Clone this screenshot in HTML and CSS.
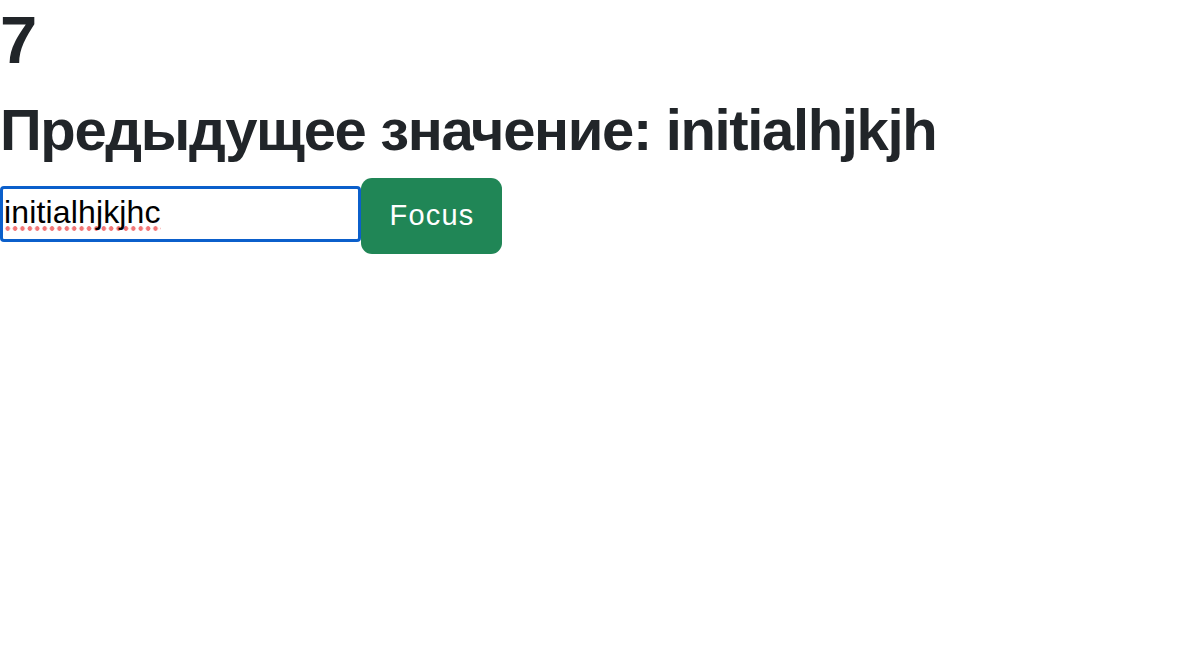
FILE: index.html
```html
<!DOCTYPE html>
<html lang="ru">
<head>
<meta charset="utf-8">
<link rel="stylesheet" href="styles.css">
</head>
<body>
<h1 class="count">7</h1>
<h2 class="prev">Предыдущее значение: initialhjkjh</h2>
<div class="row">
  <div class="field"><span class="misspelled">initialhjkjhc</span></div>
  <button class="btn-focus" type="button">Focus</button>
</div>
</body>
</html>
```
FILE: styles.css
```css
html, body {
  margin: 0;
  padding: 0;
  background: #fff;
}
body {
  font-family: "Liberation Sans", Arial, Helvetica, sans-serif;
  color: #212529;
}
.count {
  margin: 0 0 14.6px 0;
  font-size: 67px;
  font-weight: 700;
  line-height: 1.2;
}
.prev {
  margin: 0 0 13.4px 0;
  font-size: 58px;
  font-weight: 700;
  line-height: 1.2;
  letter-spacing: -1.35px;
}
.row {
  display: flex;
  align-items: flex-start;
}
.field {
  box-sizing: border-box;
  width: 361px;
  height: 56px;
  margin-top: 8px;
  border: 3px solid #0b5fcb;
  border-radius: 4px;
  padding: 7px 1px 0;
  font-size: 32px;
  letter-spacing: 0.15px;
  line-height: 1;
  color: #000;
  background: #fff;
  white-space: nowrap;
}
.misspelled {
  padding-bottom: 1px;
  background-image: radial-gradient(circle, #f27575 2px, transparent 2.6px);
  background-size: 7.4px 5px;
  background-repeat: repeat-x;
  background-position: 0 100%;
}
.btn-focus {
  box-sizing: border-box;
  width: 141px;
  height: 76px;
  border: none;
  border-radius: 11px;
  background: #208656;
  color: #fff;
  font-family: "Liberation Sans", Arial, Helvetica, sans-serif;
  font-size: 29px;
  letter-spacing: 1.2px;
  padding: 0 0 0 1px;
}
```
